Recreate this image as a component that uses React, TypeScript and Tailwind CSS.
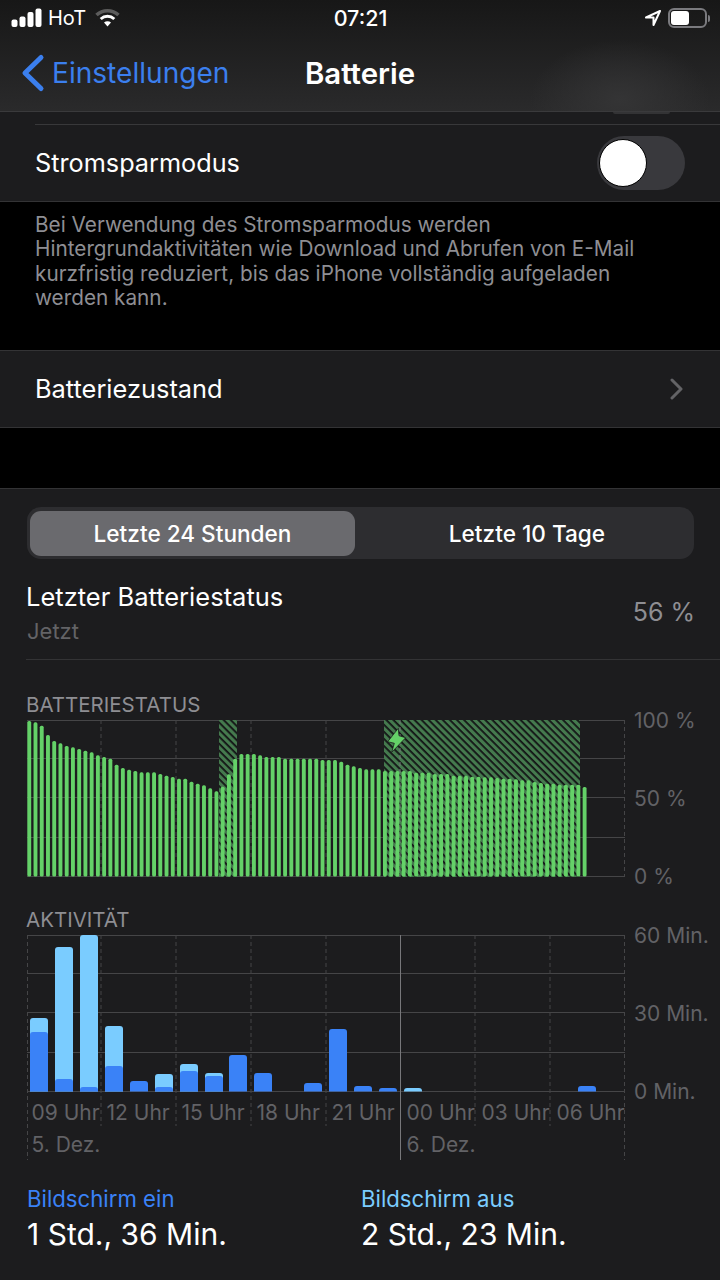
const batteryTops = [
  93, 97, 107, 135, 153, 160, 168, 172, 177, 182, 187, 196, 201, 206, 224, 234, 239, 243, 247, 247,
  247, 252, 257, 261, 266, 266, 275, 281, 286, 295, 304, 290, 253, 206, 192, 192, 192, 196, 201, 201,
  201, 206, 206, 206, 206, 206, 206, 210, 210, 210, 215, 224, 229, 234, 238, 238, 238, 243, 243, 243,
  243, 243, 248, 248, 248, 252, 252, 252, 257, 257, 257, 260, 260, 262, 262, 264, 266, 266, 268, 271,
  271, 276, 279, 281, 281, 284, 284, 284, 284, 291,
];

// x, top of the light part, top of the dark part (page coordinates)
const activityBars = [
  { x: 30, light: 1018, dark: 1032 },
  { x: 55, light: 947, dark: 1079 },
  { x: 80, light: 935, dark: 1087 },
  { x: 105, light: 1026, dark: 1066 },
  { x: 130, light: 0, dark: 1081 },
  { x: 155, light: 1074, dark: 1087 },
  { x: 180, light: 1064, dark: 1071 },
  { x: 205, light: 1073, dark: 1076 },
  { x: 229, light: 0, dark: 1055 },
  { x: 254, light: 0, dark: 1073 },
  { x: 304, light: 0, dark: 1083 },
  { x: 329, light: 0, dark: 1029 },
  { x: 354, light: 0, dark: 1086 },
  { x: 379, light: 0, dark: 1088 },
  { x: 404, light: 1088, dark: 0 },
  { x: 578, light: 0, dark: 1086 },
];

const hours = ["09 Uhr", "12 Uhr", "15 Uhr", "18 Uhr", "21 Uhr", "00 Uhr", "03 Uhr", "06 Uhr"];

function StatusBar() {
  return (
    <div className="flex h-[36px] items-center justify-between pl-[11px] pr-[10px] text-white">
      <div className="flex w-[200px] items-center">
        <svg width="31" height="20" viewBox="0 0 31 20" fill="#fff">
          <rect x="0.5" y="11.5" width="6" height="7.5" rx="2" />
          <rect x="8.5" y="8.5" width="6" height="10.5" rx="2" />
          <rect x="16.5" y="4" width="6" height="15" rx="2" />
          <rect x="24.5" y="0.5" width="6" height="18.5" rx="2" />
        </svg>
        <span className="ml-[6px] text-[20px] leading-none">HoT</span>
        <svg className="ml-[9px]" width="25" height="20" viewBox="0 0 25 20" fill="none">
          <path d="M1.5 7C7.5 1.2 17.5 1.2 23.5 7" stroke="#5c5c5c" strokeWidth="3.5" />
          <path d="M5.7 11C9.6 7.4 15.4 7.4 19.3 11" stroke="#fff" strokeWidth="3" />
          <path d="M9 14.6L12.5 18.5L16 14.6C14 12.8 11 12.8 9 14.6Z" fill="#fff" />
        </svg>
      </div>
      <span className="pt-[1px] text-[21.5px] font-medium leading-none">07:21</span>
      <div className="flex w-[200px] items-center justify-end">
        <svg width="18" height="18" viewBox="0 0 18 18" fill="none" stroke="#fff" strokeWidth="2" strokeLinejoin="round">
          <path d="M16 2L2 8.5H9.5V16L16 2Z" />
        </svg>
        <div className="ml-[6px] flex h-[20px] w-[39px] items-center rounded-[6px] border-2 border-[#7a7a7e] p-[1px]">
          <div className="h-full w-[18px] rounded-[3px] bg-white" />
        </div>
        <div className="ml-[1px] h-[7px] w-[2px] rounded-r-full bg-[#7a7a7e]" />
      </div>
    </div>
  );
}

function NavBar() {
  return (
    <div className="relative flex h-[75px] items-center justify-center">
      <div className="absolute left-[20px] top-[17px] flex items-center text-[#3b7fee]">
        <svg width="26" height="40" viewBox="0 0 26 40" fill="none" stroke="currentColor" strokeWidth="5" strokeLinecap="round" strokeLinejoin="round">
          <path d="M21 4.5L5 20L21 35.5" />
        </svg>
        <span className="ml-[6px] text-[28.1px] leading-none">Einstellungen</span>
      </div>
      <span className="text-[29.4px] font-semibold leading-none text-white">Batterie</span>
    </div>
  );
}

function Toggle() {
  return (
    <div className="flex h-[54px] w-[88px] items-center rounded-full bg-[#39393d] pl-[2px]">
      <div className="h-[48px] w-[48px] rounded-full border border-black bg-white" />
    </div>
  );
}

function SegmentedControl() {
  return (
    <div className="ml-[27px] mr-[26px] mt-[18px] flex h-[52px] items-center rounded-[14px] bg-[#2d2d30] pl-[3px] text-[22.6px] font-medium text-white">
      <div className="flex h-[45px] w-[325px] items-center justify-center rounded-[11px] bg-[#6a6a6e] pt-[1px]">
        Letzte 24 Stunden
      </div>
      <div className="flex flex-1 items-center justify-center pl-[5px] pt-[1px]">Letzte 10 Tage</div>
    </div>
  );
}

function AxisLabels({ labels }: { labels: string[] }) {
  return (
    <div className="mb-[-11px] ml-[7px] mt-[-10px] flex flex-col justify-between text-[21px] leading-[22px] text-[#626266]">
      {labels.map((label) => (
        <span key={label} className="whitespace-nowrap">
          {label}
        </span>
      ))}
    </div>
  );
}

function Grid() {
  return (
    <g stroke="#454547" strokeWidth="1">
      {[0.5, 38.5, 77.5, 117.5, 156.5].map((y) => (
        <line key={y} x1="0" x2="598" y1={y} y2={y} />
      ))}
    </g>
  );
}

function BatteryChart() {
  return (
    <div className="flex pl-[27px]">
      <div className="h-[157px] w-[600px]">
        <svg width="600" height="157" viewBox="0 0 600 157" className="block">
          <defs>
            <pattern id="hatch" width="5" height="5" patternUnits="userSpaceOnUse" patternTransform="rotate(-45)">
              <rect width="5" height="5" fill="#131315" />
              <rect width="3.2" height="5" fill="#457a4e" />
            </pattern>
          </defs>
          <Grid />
          <g stroke="#454547" strokeDasharray="4 3">
            {[74, 149, 224, 299, 448, 523, 597.5].map((x) => (
              <line key={x} x1={x} x2={x} y1="0" y2="157" />
            ))}
          </g>
          <rect x="192" y="0" width="18" height="157" fill="url(#hatch)" />
          <rect x="357" y="0" width="196" height="157" fill="url(#hatch)" />
          <line x1="373" x2="373" y1="0" y2="157" stroke="#77777a" strokeDasharray="4 3" />
          {batteryTops.map((z, i) => {
            const top = 690 + z / 3 - 720;
            return (
              <rect key={i} x={0.3 + i * 6.24} y={top} width="3.9" height={156.5 - top} rx="1.6" fill="#64d168" />
            );
          })}
          <path
            d="M371.3 8.3L360.7 21.7L367.3 23.3L364.7 32.3L378.7 17.7L372 15.7Z"
            fill="#64d168"
            stroke="#1c1c1e"
            strokeWidth="0.8"
            strokeLinejoin="round"
          />
        </svg>
      </div>
      <AxisLabels labels={["100 %", "50 %", "0 %"]} />
    </div>
  );
}

function ActivityChart() {
  return (
    <div className="flex pl-[27px]">
      <div className="relative h-[225px] w-[600px]">
        <svg width="600" height="225" viewBox="0 0 600 225" className="absolute left-0 top-0">
          <Grid />
          <g stroke="#454547" strokeDasharray="4 3">
            <line x1="0.5" x2="0.5" y1="0" y2="225" />
            <line x1="597.5" x2="597.5" y1="0" y2="225" />
            {[74, 149, 224, 299, 448, 523].map((x) => (
              <line key={x} x1={x} x2={x} y1="0" y2="191" />
            ))}
          </g>
          <line x1="373.5" x2="373.5" y1="0" y2="225" stroke="#77777a" />
          {activityBars.map((bar) => (
            <g key={bar.x}>
              {bar.light > 0 && (
                <path
                  d={`M${bar.x - 27} 156.5V${bar.light - 935 + 3}a3 3 0 0 1 3 -3h12a3 3 0 0 1 3 3V156.5Z`}
                  fill="#7accff"
                />
              )}
              {bar.dark > 0 && (
                <path
                  d={`M${bar.x - 27} 156.5V${bar.dark - 935 + 3}a3 3 0 0 1 3 -3h12a3 3 0 0 1 3 3V156.5Z`}
                  fill="#3a82f7"
                />
              )}
            </g>
          ))}
        </svg>
        <div className="relative grid grid-cols-8 pt-[166px] text-[21px] leading-[24px] text-[#626266]">
          {hours.map((hour) => (
            <span key={hour} className="whitespace-nowrap pl-[4.5px]">
              {hour}
            </span>
          ))}
          <span className="col-start-1 mt-[8px] whitespace-nowrap pl-[4.5px]">5. Dez.</span>
          <span className="col-start-6 mt-[8px] whitespace-nowrap pl-[4.5px]">6. Dez.</span>
        </div>
      </div>
      <div className="flex h-[157px]">
        <AxisLabels labels={["60 Min.", "30 Min.", "0 Min."]} />
      </div>
    </div>
  );
}

export default function App() {
  return (
    <div
      className="h-[1280px] w-[720px] overflow-hidden bg-black text-white"
      style={{ fontFamily: "Inter, 'Noto Sans', sans-serif" }}
    >
      <div className="h-[112px] border-b border-[#3a3a3c] bg-[radial-gradient(ellipse_90px_60px_at_620px_100px,#343435,transparent),linear-gradient(to_bottom,#171717,#2a2a2b)]">
        <StatusBar />
        <NavBar />
      </div>

      <div className="h-[90px] border-b border-[#333335] bg-[#1c1c1e]">
        <div className="flex h-[12px] items-start justify-end pr-[50px]">
          <div className="h-[2px] w-[57px] rounded-b-full bg-[#333335]" />
        </div>
        <div className="ml-[35px] flex h-[77px] items-center justify-between border-t border-[#38383a] pr-[35px] text-[25.25px]">
          <span className="pt-[2px]">Stromsparmodus</span>
          <Toggle />
        </div>
      </div>

      <div className="h-[148px] pl-[35px] pt-[11px] text-[20.75px] leading-[24.4px] text-[#8e8e93]">
        <p>Bei Verwendung des Stromsparmodus werden</p>
        <p>Hintergrundaktivitäten wie Download und Abrufen von E-Mail</p>
        <p>kurzfristig reduziert, bis das iPhone vollständig aufgeladen</p>
        <p>werden kann.</p>
      </div>

      <div className="flex h-[78px] items-center justify-between border-y border-[#333335] bg-[#1c1c1e] pl-[35px] pr-[37px] text-[25.4px]">
        <span>Batteriezustand</span>
        <svg width="14" height="22" viewBox="0 0 14 22" fill="none" stroke="#636366" strokeWidth="3" strokeLinecap="round" strokeLinejoin="round">
          <path d="M3 2L12 11L3 20" />
        </svg>
      </div>

      <div className="h-[60px]" />

      <div className="h-[792px] border-t border-[#333335] bg-[#1c1c1e]">
        <SegmentedControl />

        <div className="ml-[26px] mt-[18px] flex h-[83px] items-center justify-between border-b border-[#333335] pb-[11px] pr-[25px]">
          <div>
            <div className="text-[25.5px] leading-[30px]">Letzter Batteriestatus</div>
            <div className="mt-[6px] pl-[1px] text-[22px] leading-[26px] text-[#636366]">Jetzt</div>
          </div>
          <span className="text-[25px] text-[#8e8e93]">56 %</span>
        </div>

        <div className="ml-[26px] mt-[33px] text-[20.5px] leading-[24px] text-[#8e8e93]">BATTERIESTATUS</div>
        <div className="mt-[3px]">
          <BatteryChart />
        </div>

        <div className="ml-[26px] mt-[31px] text-[20.5px] leading-[24px] text-[#8e8e93]">AKTIVITÄT</div>
        <div className="mt-[3px]">
          <ActivityChart />
        </div>

        <div className="mt-[26px] grid grid-cols-[334px_1fr] pl-[27px]">
          <div>
            <div className="text-[22.2px] leading-[26px] text-[#3a82f7]">Bildschirm ein</div>
            <div className="mt-[4px] text-[30px] leading-[36px]">1 Std., 36 Min.</div>
          </div>
          <div>
            <div className="text-[22.2px] leading-[26px] text-[#7accff]">Bildschirm aus</div>
            <div className="mt-[4px] text-[30px] leading-[36px]">2 Std., 23 Min.</div>
          </div>
        </div>
      </div>
    </div>
  );
}
